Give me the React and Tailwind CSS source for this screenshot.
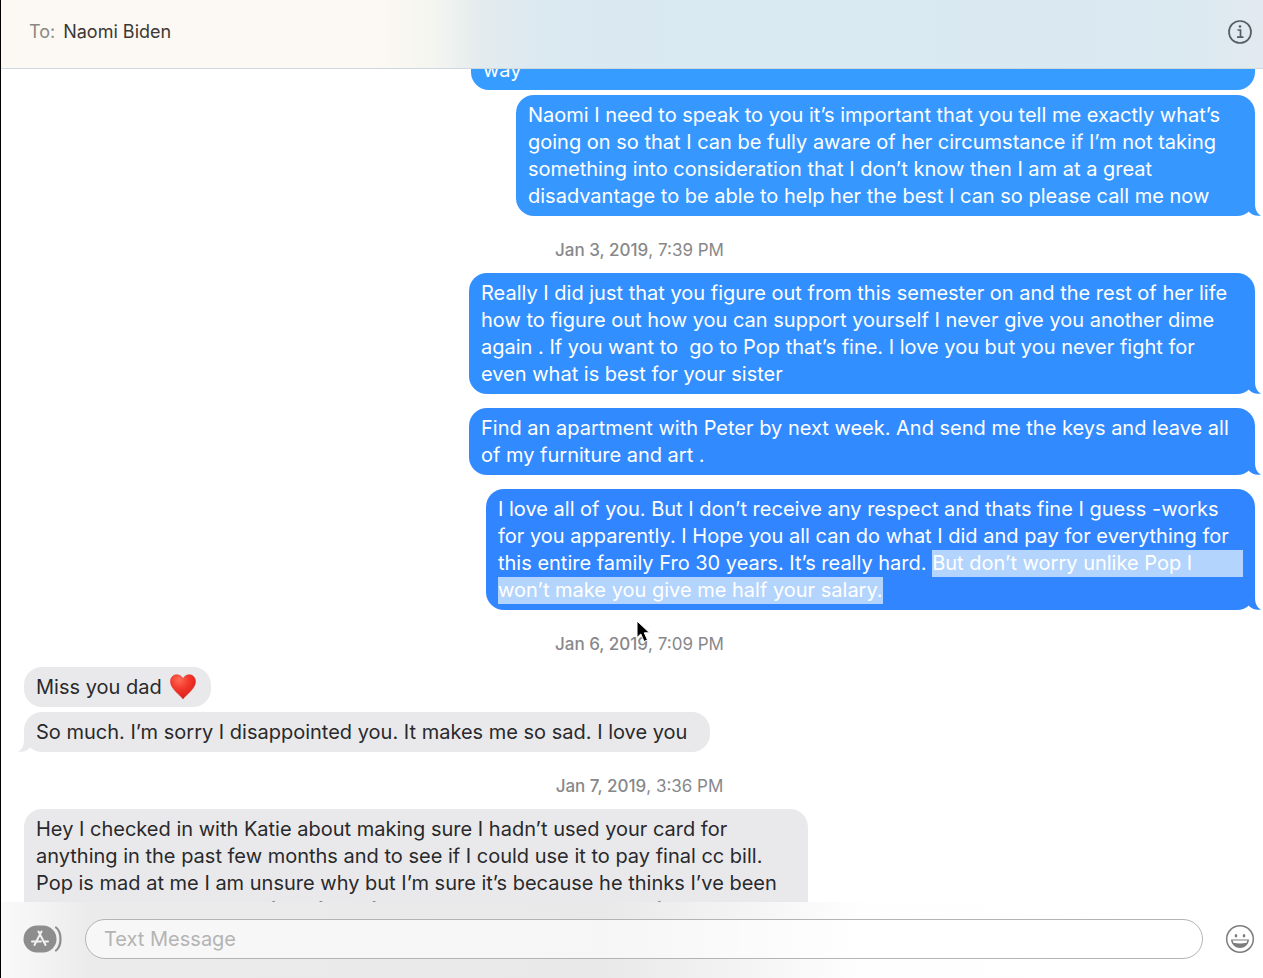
import React from "react";

function Tail({ side }) {
  const sent = side === "sent";
  return (
    <svg
      viewBox="0 0 16 20"
      aria-hidden="true"
      className={
        sent
          ? "absolute bottom-0 -right-1.5 h-5 w-4 fill-current"
          : "absolute bottom-0 -left-1.5 h-5 w-4 -scale-x-100 fill-current"
      }
    >
      <path d="M10 0V8C10 13 12 18 16 19.4C11 20.4 7 19 4 16L2 10Z" />
    </svg>
  );
}

function Bubble({ side = "sent", tail = false, tone, width, lines, className = "" }) {
  const sent = side === "sent";
  return (
    <div className={`flex ${sent ? "justify-end" : "justify-start"} ${className}`}>
      <div className={`relative max-w-full rounded-[18px] bg-current px-3 pt-[7px] pb-1.5 ${width} ${tone}`}>
        {tail && <Tail side={side} />}
        <p className={`relative text-xl leading-[27px] ${sent ? "text-white" : "text-[#29292b]"}`}>
          {lines.map((line, i) => (
            <span key={i} className="flex whitespace-pre">
              {line}
            </span>
          ))}
        </p>
      </div>
    </div>
  );
}

function Stamp({ date, time, className = "" }) {
  return (
    <p className={`text-center text-[17px] leading-6 text-[#88888a] ${className}`}>
      <span className="font-medium">{date}</span>, {time}
    </p>
  );
}

function Heart() {
  return (
    <svg viewBox="0 0 26 26" role="img" aria-label="red heart" className="ml-2 h-[26px] w-[26px]">
      <defs>
        <radialGradient id="heart" cx="0.35" cy="0.2" r="0.85">
          <stop offset="0" stopColor="#ff6a58" />
          <stop offset="0.45" stopColor="#f3382c" />
          <stop offset="1" stopColor="#d91a17" />
        </radialGradient>
      </defs>
      <path
        d="M13 25C10.5 21 1 15.5 0.5 8C0.3 3.5 3.3 0.8 6.8 0.8C9.8 0.8 12 2.5 13 5C14 2.5 16.2 0.8 19.2 0.8C22.7 0.8 25.7 3.5 25.5 8C25 15.5 15.5 21 13 25Z"
        fill="url(#heart)"
        stroke="#d9342b"
        strokeWidth="0.6"
      />
    </svg>
  );
}

function Pointer() {
  return (
    <svg viewBox="0 0 16 24" aria-hidden="true" className="absolute bottom-3 left-1/2 h-6 w-4 -translate-x-1">
      <path d="M1 1V17.5L4.8 14L8 21.5L11.5 20L8.3 12.8H13.5Z" fill="#000" stroke="#fff" strokeWidth="1" />
    </svg>
  );
}

export default function App() {
  return (
    <main className="flex h-screen flex-col overflow-hidden border-l border-black bg-white font-['Inter','Liberation_Sans',sans-serif]">
      <header className="relative flex h-[69px] shrink-0 items-center justify-between border-b border-[#cfd8dd] bg-[linear-gradient(90deg,#fcf8f3_0%,#fcf8f3_30%,#f5f6f1_34%,#e4ebee_38%,#dbe9f1_43%,#d9eaf2_60%,#dbe9f1_94%,#e2eaef_100%)] pr-2.5 pb-1 pl-7 text-lg">
        <h1 className="flex gap-2">
          <span className="text-[#8b8883]">To:</span>
          <span className="text-[#3b3936]">Naomi Biden</span>
        </h1>
        <button type="button" aria-label="Details">
          <svg viewBox="0 0 26 26" className="size-[26px]" fill="none" stroke="#555d62" strokeWidth="1.7">
            <circle cx="13" cy="13" r="11" />
            <path d="M10.5 11H13.5V18M10 18.2H16.5" />
            <circle cx="13" cy="7.5" r="1.3" fill="#555d62" stroke="none" />
          </svg>
        </button>
      </header>

      <section aria-label="Messages" className="min-h-0 flex-1 overflow-hidden pr-2 pl-[23px]">
        <Bubble className="-mt-[19px]" width="w-[784px]" tone="text-[#369cff]" lines={["way"]} />
        <Bubble
          tail
          className="mt-[5px]"
          width="w-[739px]"
          tone="text-[#3698ff]"
          lines={[
            "Naomi I need to speak to you it’s important that you tell me exactly what’s",
            "going on so that I can be fully aware of her circumstance if I’m not taking",
            "something into consideration that I don’t know then I am at a great",
            "disadvantage to be able to help her the best I can so please call me now",
          ]}
        />
        <Stamp className="mt-[22px]" date="Jan 3, 2019" time="7:39 PM" />
        <Bubble
          tail
          className="mt-[11px]"
          width="w-[786px]"
          tone="text-[#328fff]"
          lines={[
            "Really I did just that you figure out from this semester on and the rest of her life",
            "how to figure out how you can support yourself I never give you another dime",
            "again . If you want to  go to Pop that’s fine. I love you but you never fight for",
            "even what is best for your sister",
          ]}
        />
        <Bubble
          tail
          className="mt-3.5"
          width="w-[786px]"
          tone="text-[#328aff]"
          lines={[
            "Find an apartment with Peter by next week. And send me the keys and leave all",
            "of my furniture and art .",
          ]}
        />
        <Bubble
          tail
          className="mt-3.5"
          width="w-[769px]"
          tone="text-[#3186ff]"
          lines={[
            "I love all of you. But I don’t receive any respect and thats fine I guess -works",
            "for you apparently. I Hope you all can do what I did and pay for everything for",
            <>
              this entire family Fro 30 years. It’s really hard.{" "}
              <mark className="grow bg-[#b3d4fc] text-white">But don’t worry unlike Pop I</mark>
            </>,
            <mark className="bg-[#b3d4fc] text-white">won’t make you give me half your salary.</mark>,
          ]}
        />
        <div className="relative mt-[22px]">
          <Stamp date="Jan 6, 2019" time="7:09 PM" />
          <Pointer />
        </div>
        <Bubble
          side="received"
          className="mt-[11px]"
          width="w-[187px]"
          tone="text-[#e9e9eb]"
          lines={[
            <>
              Miss you dad
              <Heart />
            </>,
          ]}
        />
        <Bubble
          side="received"
          tail
          className="mt-[5px]"
          width="w-[686px]"
          tone="text-[#e9e9eb]"
          lines={["So much. I’m sorry I disappointed you. It makes me so sad. I love you"]}
        />
        <Stamp className="mt-[22px]" date="Jan 7, 2019" time="3:36 PM" />
        <Bubble
          side="received"
          className="mt-[11px]"
          width="w-[784px]"
          tone="text-[#e9e9eb]"
          lines={[
            "Hey I checked in with Katie about making sure I hadn’t used your card for",
            "anything in the past few months and to see if I could use it to pay final cc bill.",
            "Pop is mad at me I am unsure why but I’m sure it’s because he thinks I’ve been",
            "asked her to pay some of my flight first year and all my time out of school yet",
          ]}
        />
      </section>

      <footer className="flex h-[76px] shrink-0 items-center gap-[22px] bg-[linear-gradient(90deg,#fafafa_0%,#ebebeb_7%,#e9e9e9_48%,#f3f3f3_58%,#fefefe_68%,#ffffff_100%)] pr-2 pb-0.5 pl-[22px]">
        <button type="button" aria-label="Apps">
          <svg viewBox="0 0 40 28" className="h-7 w-10" fill="none" strokeLinecap="round">
            <rect x="0.5" y="0.5" width="33" height="27" rx="13.5" fill="#8d8d8d" />
            <path d="M33 2.5Q37.500 6 37.500 14T33 25.500" stroke="#8d8d8d" strokeWidth="2.2" />
            <path d="M15.5 6.5L22.5 20M18.5 6.5L11.5 20M9 16.5H18M22 16.5H25" stroke="#f1f1f1" strokeWidth="2" />
          </svg>
        </button>
        <input
          type="text"
          aria-label="Text Message"
          placeholder="Text Message"
          className="h-10 min-w-0 flex-1 rounded-full border border-[#b4b4b4] bg-white/60 px-[18px] text-xl text-[#29292b] outline-none placeholder:text-[#b4b4b4]"
        />
        <button type="button" aria-label="Emoji">
          <svg viewBox="0 0 30 30" className="size-[30px]">
            <circle cx="15" cy="15" r="13.3" fill="none" stroke="#7d7d7d" strokeWidth="1.5" />
            <ellipse cx="11" cy="11.8" rx="1.3" ry="1.7" fill="#7d7d7d" />
            <ellipse cx="19" cy="11.8" rx="1.3" ry="1.7" fill="#7d7d7d" />
            <path d="M6 15.5H24C23.5 21 19.5 24 15 24S6.5 21 6 15.5Z" fill="#7d7d7d" />
            <path d="M7.6 16.6H22.4L21.6 18.8Q15 20 8.4 18.8Z" fill="#fff" />
          </svg>
        </button>
      </footer>
    </main>
  );
}
